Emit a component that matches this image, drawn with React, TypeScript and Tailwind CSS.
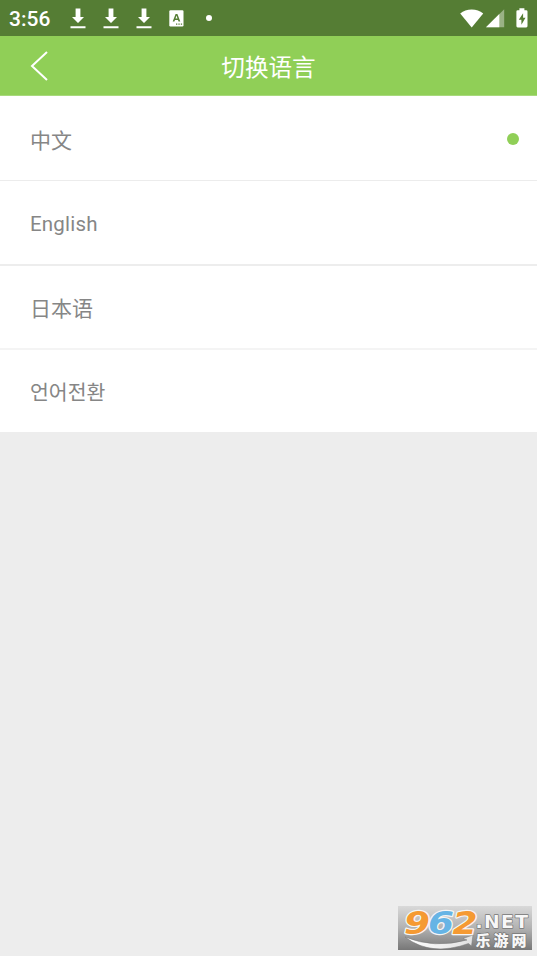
type Language = { label: string; selected?: boolean; row: string; text: string };

const languages: Language[] = [
  { label: '中文', selected: true, row: 'h-[85px] border-b border-[#ececec]', text: 'text-[21px] pt-[5px]' },
  { label: 'English', row: 'h-[85px] border-b-2 border-[#ededed]', text: 'text-[20.5px] pt-[2px] tracking-[0.2px]' },
  { label: '日本语', row: 'h-[84px] border-b-2 border-[#f4f4f4]', text: 'text-[21px] pt-[3px]' },
  { label: '언어전환', row: 'h-[82px]', text: 'text-[20.5px] pt-[3px]' },
];

function DownloadIcon() {
  return (
    <svg className="mt-[1px]" width="16" height="21" viewBox="0 0 16 21" fill="#fff">
      <path d="M5.6.4h4.8V9H14l-6 6-6-6h3.6zM.5 18.2h15v2H.5z" />
    </svg>
  );
}

function StatusBar() {
  return (
    <div className="flex h-9 items-center bg-[#557d34] pl-[9px] pr-[9px] text-white">
      <span className="w-[61px] pt-[2px] text-[21px] font-medium leading-6 font-['Roboto',sans-serif]">3:56</span>
      <div className="flex items-center gap-[17px]">
        <DownloadIcon />
        <DownloadIcon />
        <DownloadIcon />
      </div>
      <svg className="ml-[17px]" width="15" height="17" viewBox="0 0 15 17">
        <rect x=".3" y=".3" width="14.2" height="16.2" rx="1.2" fill="#fff" />
        <path d="M3.7 11.5 6.6 4h1.8l2.9 7.5H9.5l-.5-1.6H6l-.6 1.6zM6.5 8.5h2L7.5 5.6z" fill="#557d34" />
        <path d="M7 13.6h1.3v1.2H7zM9.4 13.6h1.3v1.2H9.4zM11.8 13.6h1.3v1.2h-1.3z" fill="#557d34" />
      </svg>
      <span className="ml-[22px] size-[6px] rounded-full bg-white" />
      <div className="ml-auto flex items-center">
        <svg width="24" height="19" viewBox="0 0 24 19" fill="#fff">
          <path d="M.2 4.6C3.4 1.9 7.2.5 11.7.5s8.3 1.4 11.5 4.1L11.7 18.6z" />
        </svg>
        <svg className="ml-[2px]" width="19" height="19" viewBox="0 0 19 19">
          <path d="M0 18.3 18.2.2v18.1z" fill="#9ab285" />
          <path d="M0 18.3 13.3 5.1v13.2z" fill="#fff" />
        </svg>
        <svg className="ml-[11px]" width="12" height="20" viewBox="0 0 12 20">
          <path d="M3.4.2h5v2h1.8q1.3 0 1.3 1.3v14.6q0 1.3-1.3 1.3H1.7q-1.3 0-1.3-1.3V3.5q0-1.3 1.3-1.3h1.7z" fill="#fff" />
          <path d="M7.1 5.3 2.8 11.8h2.6v5l4.1-7H7.1z" fill="#557d34" />
        </svg>
      </div>
    </div>
  );
}

function Watermark() {
  return (
    <svg className="absolute bottom-[6px] right-[5px] overflow-visible" width="134" height="44" viewBox="0 0 134 44">
      <defs>
        <linearGradient id="plate" x1="0" y1="0" x2="0" y2="1">
          <stop offset="0" stopColor="#d9d9d9" />
          <stop offset=".5" stopColor="#b2b2b2" />
          <stop offset="1" stopColor="#777" />
        </linearGradient>
        <linearGradient id="swoosh" x1="0" x2="1">
          <stop offset="0" stopColor="#fff" />
          <stop offset="1" stopColor="#e1e1e1" />
        </linearGradient>
      </defs>
      <rect width="134" height="44" fill="url(#plate)" />
      <path d="M7 31Q36 43 69 34L65 32.5l10-3.5-1.5 11-3-2.5Q33 51 7 31z" fill="url(#swoosh)" stroke="#777" strokeWidth=".5" />
      <g fontFamily="'DejaVu Sans', sans-serif" fontWeight="700" fontStyle="italic" fontSize="32" strokeWidth="2.4" stroke="#f5f5f5" paintOrder="stroke" strokeLinejoin="round">
        <text x="6" y="27.5" fill="#f59a32" textLength="26" lengthAdjust="spacingAndGlyphs">9</text>
        <text x="30" y="27.5" fill="#66b4e5" textLength="26" lengthAdjust="spacingAndGlyphs">6</text>
        <text x="54.5" y="27.5" fill="#f59a32" textLength="25" lengthAdjust="spacingAndGlyphs">2</text>
      </g>
      <g fill="#f7f7f7" stroke="#777" strokeWidth="1.4" paintOrder="stroke" strokeLinejoin="round">
        <text x="77.5" y="21.5" fontFamily="'DejaVu Sans', sans-serif" fontWeight="700" fontSize="18" letterSpacing="1.4" textLength="54" lengthAdjust="spacingAndGlyphs">.NET</text>
        <text x="77.5" y="39.5" fontFamily="'Noto Sans CJK SC', sans-serif" fontWeight="900" fontSize="15" textLength="51">乐游网</text>
      </g>
    </svg>
  );
}

export default function App() {
  return (
    <div className="relative flex h-[956px] w-[537px] flex-col overflow-hidden bg-[#ededed] font-['Roboto','Noto_Sans_CJK_SC','Noto_Sans_CJK_KR',sans-serif]">
      <StatusBar />
      <header className="grid h-[60px] grid-cols-[80px_1fr_80px] items-center border-b border-[#a8d97c] bg-[#90cf57] text-white">
        <svg className="ml-[30px]" width="19" height="30" viewBox="0 0 19 30" fill="none" stroke="#fff" strokeWidth="2">
          <path d="M17 1 2 15l15 14" />
        </svg>
        <h1 className="pt-[4px] text-center text-[23.6px] font-normal leading-8">切换语言</h1>
      </header>
      <ul className="bg-white text-[#868686]">
        {languages.map((l) => (
          <li key={l.label} className={`flex items-center justify-between pl-[30px] pr-[18px] ${l.row}`}>
            <span className={`leading-8 ${l.text}`}>{l.label}</span>
            {l.selected && <span className="mt-[2px] size-3 rounded-full bg-[#90cf57]" />}
          </li>
        ))}
      </ul>
      <Watermark />
    </div>
  );
}
